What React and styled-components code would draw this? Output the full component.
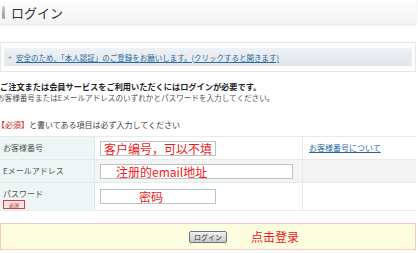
import React from 'react';
import styled, { createGlobalStyle } from 'styled-components';

const GlobalStyle = createGlobalStyle`
  html, body {
    margin: 0;
    padding: 0;
    background: #fff;
  }
  body {
    width: 418px;
    height: 253px;
    overflow: hidden;
    font-family: "Noto Sans CJK JP", "Noto Sans", sans-serif;
    color: #444;
  }
`;

const Page = styled.div`
  width: 416px;
  display: flex;
  flex-direction: column;
`;

const TitleBar = styled.div`
  height: 24px;
  display: flex;
  align-items: center;
  gap: 6px;
  padding-left: 2px;
  background: linear-gradient(#ffffff, #f3f3f5);
  box-shadow: 0 1px 2px rgba(0, 0, 0, 0.12);
`;

const Marker = styled.span`
  width: 3px;
  height: 13px;
  border-radius: 2px;
  background: linear-gradient(#c8c8c8, #9a9a9a);
`;

const Title = styled.h1`
  margin: 0;
  font-size: 13px;
  font-weight: normal;
  color: #333;
  line-height: 1;
`;

const Notice = styled.div`
  margin-top: 18px;
  height: 30px;
  box-sizing: border-box;
  border: 1px solid #e6e6e8;
  padding: 5px 3px;
`;

const NoticeBar = styled.div`
  height: 18px;
  display: flex;
  align-items: center;
  gap: 4px;
  padding-left: 4px;
  background: linear-gradient(#eef1f5, #e1e7ee);
`;

const Plus = styled.span`
  color: #777;
  font-size: 7px;
`;

const Link = styled.a`
  color: ${(p) => p.$color || '#2b6a9e'};
  text-decoration: underline;
  font-size: ${(p) => p.$size || 7.5}px;
  white-space: nowrap;
`;

const Intro = styled.div`
  margin-top: 8px;
  display: flex;
  flex-direction: column;
  white-space: nowrap;
`;

const Lead = styled.p`
  margin: 0;
  font-size: 8.2px;
  line-height: 12px;
  font-weight: bold;
  color: #222;
`;

const Sub = styled.p`
  margin: 0 0 0 -3px;
  font-size: 7.6px;
  line-height: 12px;
  color: #555;
`;

const Required = styled.p`
  margin: 15px 0 0 -3px;
  font-size: 8px;
  line-height: 12px;
  color: #444;
`;

const Red = styled.span`
  color: #d42020;
`;

const FormGrid = styled.div`
  margin-top: 5px;
  display: grid;
  grid-template-columns: 95px 208px 113px;
  grid-template-rows: 23px 23px 27px;
  border-top: 1px solid #e8ecec;
  border-bottom: 1px solid #e8ecec;
`;

const LabelCell = styled.div`
  background: #eef5f5;
  border-bottom: ${(p) => (p.$last ? 'none' : '1px solid #e2eaea')};
  border-right: 1px solid #e2e8e8;
  padding: 5px 0 0 3px;
  font-size: 8px;
  line-height: 11px;
  color: #555;
  display: flex;
  flex-direction: column;
  align-items: flex-start;
  gap: 1px;
`;

const Cell = styled.div`
  background: ${(p) => (p.$shade ? '#f4f4f4' : '#fff')};
  border-bottom: ${(p) => (p.$last ? 'none' : '1px solid #e8e8e8')};
  border-right: ${(p) => (p.$edge ? '1px solid #e8e8e8' : 'none')};
  display: flex;
  align-items: ${(p) => (p.$top ? 'flex-start' : 'center')};
  padding: ${(p) => (p.$top ? '5px 0 0 6px' : '0 0 0 5px')};
`;

const Field = styled.div`
  width: ${(p) => p.$w}px;
  height: 15px;
  box-sizing: border-box;
  border: 1px solid #b3c6ca;
  background: #fff;
  color: #f01818;
  font-size: 12px;
  line-height: 13px;
  padding-left: ${(p) => p.$pad || 3}px;
  white-space: nowrap;
  overflow: hidden;
`;

const Badge = styled.span`
  font-size: 5px;
  line-height: 7px;
  padding: 0 5px;
  color: #c01818;
  background: #fbe3e3;
  border: 1px solid #d04040;
`;

const Footer = styled.div`
  margin-top: 12px;
  height: 27px;
  box-sizing: border-box;
  background: #fcfcdf;
  border: 1px solid #f3c8c8;
  display: flex;
  align-items: center;
  padding-left: 188px;
  gap: 24px;
`;

const Button = styled.button`
  width: 38px;
  height: 12px;
  padding: 0;
  font-family: inherit;
  font-size: 7px;
  line-height: 10px;
  color: #333;
  background: linear-gradient(#f2f2f2, #c9c9c9);
  border: 1px solid #6c7478;
  border-radius: 2px;
`;

const Hint = styled.span`
  color: #f01818;
  font-size: 12px;
`;

export default function App() {
  return (
    <>
      <GlobalStyle />
      <Page>
        <TitleBar>
          <Marker />
          <Title>ログイン</Title>
        </TitleBar>

        <Notice>
          <NoticeBar>
            <Plus>+</Plus>
            <Link>安全のため、「本人認証」のご登録をお願いします。(クリックすると開きます)</Link>
          </NoticeBar>
        </Notice>

        <Intro>
          <Lead>ご注文または会員サービスをご利用いただくにはログインが必要です。</Lead>
          <Sub>お客様番号またはEメールアドレスのいずれかとパスワードを入力してください。</Sub>
          <Required>
            <Red>【必須】</Red>と書いてある項目は必ず入力してください
          </Required>
        </Intro>

        <FormGrid>
          <LabelCell>お客様番号</LabelCell>
          <Cell $edge>
            <Field $w={116}>客户编号，可以不填</Field>
          </Cell>
          <Cell $top>
            <Link $size={8}>お客様番号について</Link>
          </Cell>

          <LabelCell>Eメールアドレス</LabelCell>
          <Cell $shade $edge>
            <Field $w={193} $pad={15}>注册的email地址</Field>
          </Cell>
          <Cell $shade />

          <LabelCell $last>
            パスワード
            <Badge>必須</Badge>
          </LabelCell>
          <Cell $last $edge>
            <Field $w={116} $pad={38}>密码</Field>
          </Cell>
          <Cell $last />
        </FormGrid>

        <Footer>
          <Button>ログイン</Button>
          <Hint>点击登录</Hint>
        </Footer>
      </Page>
    </>
  );
}
